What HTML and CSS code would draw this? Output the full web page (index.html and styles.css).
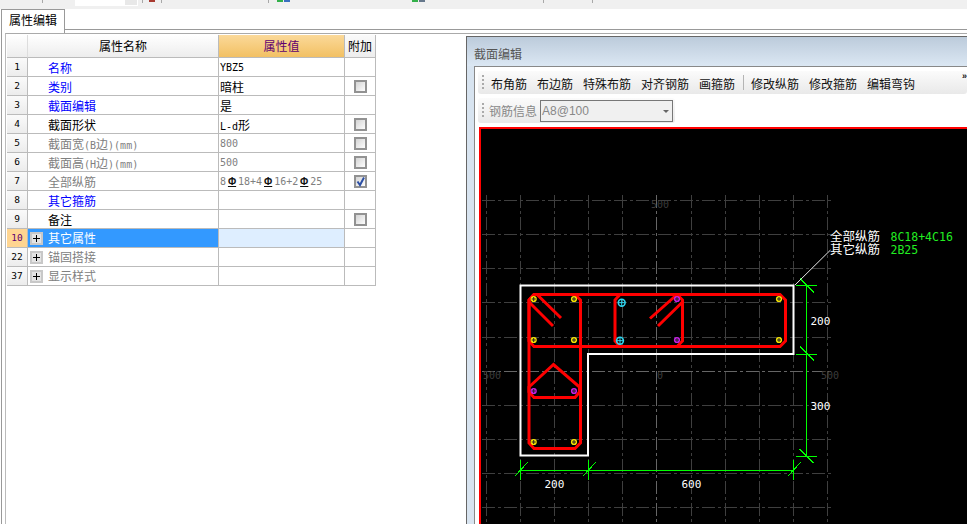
FILE: index.html
```html
<!DOCTYPE html>
<html lang="zh-CN">
<head>
<meta charset="utf-8">
<title>属性编辑</title>
<link rel="stylesheet" href="styles.css">
</head>
<body>
<div class="app">
  <div class="topstrip">
    <i class="sep s1"></i>
    <span class="combo-stub"><span class="stub-a"></span><span class="stub-b"></span></span>
    <i class="sep s2"></i>
    <span class="ico red"></span>
    <i class="sep s3"></i>
    <i class="sep s4"></i>
    <span class="ico gb"><b></b><u></u></span>
    <span class="ico gb2"><b></b><u></u></span>
    <i class="sep s5"></i>
    <i class="sep s6"></i>
  </div>
  <div class="panel">
    <div class="tabs">
      <div class="tab">属性编辑</div>
      <div class="tabline"></div>
    </div>
    <div class="pane">
      <div class="table">
        <div class="row head">
          <div class="c num"></div>
          <div class="c name">属性名称</div>
          <div class="c val">属性值</div>
          <div class="c add">附加</div>
        </div>
        <div class="row"><div class="c num">1</div><div class="c name link">名称</div><div class="c val mono">YBZ5</div><div class="c add"></div></div>
        <div class="row"><div class="c num">2</div><div class="c name link">类别</div><div class="c val">暗柱</div><div class="c add"><span class="cb"></span></div></div>
        <div class="row"><div class="c num">3</div><div class="c name link">截面编辑</div><div class="c val">是</div><div class="c add"></div></div>
        <div class="row"><div class="c num">4</div><div class="c name">截面形状</div><div class="c val"><span class="mono">L-d</span>形</div><div class="c add"><span class="cb"></span></div></div>
        <div class="row"><div class="c num">5</div><div class="c name muted">截面宽<span class="mono">(B</span>边<span class="mono">)(mm)</span></div><div class="c val mono muted">800</div><div class="c add"><span class="cb"></span></div></div>
        <div class="row"><div class="c num">6</div><div class="c name muted">截面高<span class="mono">(H</span>边<span class="mono">)(mm)</span></div><div class="c val mono muted">500</div><div class="c add"><span class="cb"></span></div></div>
        <div class="row"><div class="c num">7</div><div class="c name muted">全部纵筋</div><div class="c val mono muted">8<span class="rb">Φ</span>18+4<span class="rb">Φ</span>16+2<span class="rb">Φ</span>25</div><div class="c add"><span class="cb"><svg class="tick" viewBox="0 0 11 11"><path d="M2.5 5.5 5 9 9 1.5"/></svg></span></div></div>
        <div class="row"><div class="c num">8</div><div class="c name link">其它箍筋</div><div class="c val"></div><div class="c add"></div></div>
        <div class="row"><div class="c num">9</div><div class="c name">备注</div><div class="c val"></div><div class="c add"><span class="cb"></span></div></div>
        <div class="row sel"><div class="c num">10</div><div class="c name tree"><span class="plus"></span>其它属性</div><div class="c val"></div><div class="c add"></div></div>
        <div class="row"><div class="c num">22</div><div class="c name tree muted"><span class="plus"></span>锚固搭接</div><div class="c val"></div><div class="c add"></div></div>
        <div class="row"><div class="c num">37</div><div class="c name tree muted"><span class="plus"></span>显示样式</div><div class="c val"></div><div class="c add"></div></div>
      </div>
      <div class="window">
        <div class="wtitle">截面编辑</div>
        <div class="wbody">
          <div class="bar bar1">
            <span class="grip"></span>
            <span class="btn">布角筋</span>
            <span class="btn">布边筋</span>
            <span class="btn">特殊布筋</span>
            <span class="btn">对齐钢筋</span>
            <span class="btn">画箍筋</span>
            <span class="bsep"></span>
            <span class="btn">修改纵筋</span>
            <span class="btn">修改箍筋</span>
            <span class="btn">编辑弯钩</span>
            <span class="chev">»</span>
          </div>
          <div class="bar bar2">
            <span class="grip"></span>
            <span class="blabel">钢筋信息</span>
            <span class="combo">A8@100<span class="arrow"></span></span>
          </div>
          <div class="canvas">
            <svg class="draw" viewBox="481 129 486 395" width="486" height="395">
              <defs>
                <g id="d"><circle r="3.1" fill="currentColor"/><path d="M-2 0H2M0-2V2" stroke="#222" stroke-width="1"/></g>
                <g id="dl"><circle r="3.4" fill="none" stroke="currentColor" stroke-width="1.6"/><path d="M-3 0H3M0-3V3" stroke="currentColor" stroke-width="1"/></g>
              </defs>
              <path class="grid" d="M482 200.5H833M482 234.5H833M482 268.5H833M482 302.5H833M482 337.5H833M482 405.5H833M482 439.5H833M482 473.5H833M482 507.5H833"/>
              <path class="grid" d="M486.5 195V524M520.5 195V524M554.5 195V524M588.5 195V524M622.5 195V524M691.5 195V524M725.5 195V524M759.5 195V524M793.5 195V524M827.5 195V524"/>
              <path class="grid axis" d="M482 371.5H833M656.5 195V524"/>
              <text class="tick-label" x="651" y="208">500</text>
              <text class="tick-label" x="483" y="379">500</text>
              <text class="tick-label" x="657" y="379">0</text>
              <text class="tick-label" x="821" y="379">500</text>

              <path class="outline" d="M520.5 285.5H793.5V354H588V455.5H520.5Z"/>

              <g class="bar-red">
                <path d="M534 294.5H780L785.5 300V341L780 346.5H534L529 341V300Z"/>
                <path d="M534 294.5H575L580.5 300V443L575 448.5H534L529 443V300Z"/>
                <path d="M620 294.5H677L682.5 300V341L677 346.5H620L615 341V300Z"/>
                <path d="M529 387L553.5 364.5L579.5 387V392L575 397.5H534L529 392Z"/>
                <path d="M529 302L553 326M537 294.5L561 318M677 294.5L650 318.5M682.5 302L658 326"/>
              </g>

              <use href="#d" class="yl" x="533.7" y="299"/>
              <use href="#d" class="yl" x="574" y="299"/>
              <use href="#d" class="yl" x="533.7" y="340"/>
              <use href="#d" class="yl" x="574" y="340"/>
              <use href="#d" class="yl" x="533.7" y="442"/>
              <use href="#d" class="yl" x="574" y="442"/>
              <use href="#d" class="yl" x="779" y="299"/>
              <use href="#d" class="yl" x="779" y="340"/>
              <use href="#d" class="mg" x="533.7" y="391"/>
              <use href="#d" class="mg" x="574" y="391"/>
              <use href="#d" class="mg" x="677" y="299"/>
              <use href="#d" class="mg" x="677" y="340"/>
              <use href="#dl" class="cy" x="621.7" y="302.7"/>
              <use href="#dl" class="cy" x="620" y="340.7"/>

              <path class="dim" d="M806.5 285V457M796 285.5H817M796 354.5H817M796 456.5H817M800 278.5L814 292.5M800 346.5L814 360.5M799.5 449L813.5 463"/>
              <path class="dim" d="M520.5 470.5H793.5M520.5 460V480M588.5 460V480M793.5 460V480M514.5 476.5L527.5 462.5M582.5 476.5L595.5 462.5M787.5 476.5L800.5 462.5"/>

              <path class="leader" d="M795 285L830.5 250"/>
              <text class="note" x="830" y="241">全部纵筋</text>
              <text class="note" x="830" y="254">其它纵筋</text>
              <text class="note-g" x="890.5" y="241">8C18+4C16</text>
              <text class="note-g" x="890.5" y="254">2B25</text>

              <text class="size" x="810.5" y="324.5">200</text>
              <text class="size" x="810.5" y="409.5">300</text>
              <text class="size" x="544.5" y="487.5">200</text>
              <text class="size" x="681.5" y="487.5">600</text>
            </svg>
          </div>
        </div>
      </div>
    </div>
  </div>
</div>
</body>
</html>
```
FILE: styles.css
```css
* { box-sizing: border-box; }
html, body { margin: 0; height: 100%; overflow: hidden; background: #fff; }
body { font-family: "Noto Sans CJK SC", "Liberation Sans", sans-serif; font-size: 12px; color: #000; }
.app { width: 967px; height: 524px; display: flex; flex-direction: column; overflow: hidden; }

/* clipped toolbar strip */
.topstrip { flex: none; height: 9px; background: #f0f0f0; display: flex; align-items: flex-start; }
.sep { flex: none; width: 1px; height: 3px; background: #a8a8a8; }
.s1 { margin-left: 42px; }
.combo-stub { display: flex; margin-left: 32px; height: 6px; border-bottom: 1px solid #fff; border-right: 1px solid #fff; }
.stub-a { width: 50px; background: #fff; }
.stub-b { width: 12px; background: #e8e8e8; }
.s2 { margin-left: 4px; }
.ico { flex: none; display: flex; height: 2px; }
.ico.red { width: 6px; margin-left: 6px; background: #a83a30; }
.s3 { margin-left: 6px; }
.s4 { margin-left: 106px; }
.ico.gb { margin-left: 8px; width: 13px; }
.ico.gb2 { margin-left: 122px; width: 13px; }
.ico b { width: 6px; background: #33b04a; }
.ico u { width: 6px; margin-left: 1px; background: #3a70c0; }
.ico.gb2 u { background: #66788c; }
.s5 { margin-left: 118px; }
.s6 { margin-left: 48px; }

/* left panel + tab */
.panel { flex: 1; min-height: 0; margin-left: 1px; border-left: 1px solid #999; display: flex; flex-direction: column; }
.tabs { flex: none; height: 24px; display: flex; align-items: flex-start; }
.tab { flex: none; width: 63px; height: 24px; border-top: 1px solid #999; border-right: 1px solid #999; padding-left: 7px; line-height: 19px; font-size: 12px; }
.tabline { flex: 1; height: 21px; border-bottom: 1px solid #999; }
.pane { flex: 1; min-height: 0; margin-left: 3px; border-left: 1px solid #bbb; border-top: 1px solid #aaa; padding-top: 1px; display: flex; align-items: stretch; }

/* property table */
.table { flex: none; align-self: flex-start; margin-left: 1px; width: 369px; }
.row { display: grid; grid-template-columns: 21px 191px 126px 31px; height: 19px; }
.c { border-right: 1px solid #bbb; border-bottom: 1px solid #bbb; line-height: 20px; white-space: nowrap; overflow: hidden; }
.num { background: linear-gradient(#fafafa, #ececec); font-family: "DejaVu Sans Mono", monospace; font-size: 9.5px; line-height: 18px; text-align: center; }
.name { padding-left: 20px; }
.val { padding-left: 1px; }
.add { display: flex; align-items: center; justify-content: center; }
.link { color: #0000ff; }
.muted { color: #808080; }
.mono { font-family: "DejaVu Sans Mono", monospace; font-size: 10px; }
.rb { display: inline-block; width: 12px; text-align: center; color: #111; font-family: "Liberation Sans", sans-serif; font-weight: bold; font-size: 10px; line-height: 9px; text-decoration: underline; }

.head { height: 23px; }
.head .c { line-height: 22px; text-align: center; background: linear-gradient(#fff, #ededed); border-right-color: #ddd; border-bottom-color: #bbb; padding: 0; display: block; }
.head .name { border-right-color: #bbb; }
.head .val { background: linear-gradient(#fbd999, #f2c063); color: #5f0070; border-right-color: #bbb; }
.head .add { background: linear-gradient(#fafafa, #ededed); border-right-color: #bbb; }

.cb { display: block; position: relative; width: 13px; height: 13px; border: 2px solid #929292; background: linear-gradient(135deg, #d4d4d4, #fdfdfd); }
.tick { display: block; position: absolute; left: -1px; top: -1px; width: 11px; height: 11px; fill: none; stroke: #2c4fa5; stroke-width: 2; }

.tree { padding-left: 2px; display: flex; align-items: center; }
.plus { flex: none; position: relative; width: 13px; height: 13px; margin-right: 5px; border: 2px solid #c8c8c8; background: #e4e4e4; }
.plus::before, .plus::after { content: ""; position: absolute; background: #000; }
.plus::before { left: 1px; top: 4px; width: 7px; height: 1px; }
.plus::after { left: 4px; top: 1px; width: 1px; height: 7px; }

.sel .num { background: #ffd591; color: #5f0070; }
.sel .name { background: #3399ff; color: #fff; }
.sel .val { background: #deeeff; }

/* floating section editor */
.window { flex: none; width: 501px; margin-left: auto; margin-top: 1px; border-top: 1px solid #666; border-left: 1px solid #666; background: #d8e4f0; display: flex; flex-direction: column; overflow: hidden; }
.wtitle { flex: none; height: 29px; padding-left: 7px; line-height: 33px; color: #555; background: linear-gradient(#bccbdb, #dbe7f3); }
.wbody { flex: 1; min-height: 0; margin-left: 7px; border-left: 1px solid #888; border-top: 1px solid #888; background: #fff; padding-top: 4px; display: flex; flex-direction: column; }
.bar { flex: none; margin-left: 3px; display: flex; align-items: center; background: linear-gradient(#fbfbfb, #e9e9e9); border-radius: 3px; }
.bar1 { height: 23px; }
.bar2 { height: 25px; width: 197px; margin-top: 4px; }
.grip { flex: none; width: 2px; height: 15px; margin-left: 4px; margin-right: 2px; background: repeating-linear-gradient(#aaa 0 2px, transparent 2px 4px); }
.btn { flex: none; padding: 2px 5px 0; color: #111; white-space: nowrap; }
.bsep { flex: none; width: 1px; height: 15px; margin: 0 2px 0 3px; background: #b4b4b4; }
.chev { margin-left: auto; align-self: flex-start; font-family: "Liberation Sans", sans-serif; font-weight: bold; font-size: 9px; line-height: 11px; color: #111; }
.blabel { flex: none; margin-left: 3px; color: #888; white-space: nowrap; }
.combo { flex: none; position: relative; width: 133px; height: 22px; margin-left: 3px; padding-left: 1px; border: 1px solid #777; background: #f0f0f0; color: #888; font-family: "Liberation Sans", sans-serif; font-size: 12px; line-height: 20px; }
.arrow { position: absolute; right: 3px; top: 9px; border-left: 3px solid transparent; border-right: 3px solid transparent; border-top: 3px solid #666; }

/* drawing */
.canvas { flex: 1; min-height: 0; margin-top: 4px; margin-left: 4px; border-top: 2px solid #f00; border-left: 2px solid #f00; background: #000; overflow: hidden; }
.draw { display: block; }
.grid { fill: none; stroke: #3f3f3f; stroke-width: 1; stroke-dasharray: 13 3 3 3; }
.axis { stroke: #666; }
.tick-label { font-family: "DejaVu Sans Mono", monospace; font-size: 10px; fill: #3c3c3c; }
.outline { fill: none; stroke: #fff; stroke-width: 2; }
.bar-red path { fill: none; stroke: #f00; stroke-width: 3; }
.yl { color: #f5e400; }
.mg { color: #c81ee8; }
.cy { color: #2fd6f0; }
.dim { fill: none; stroke: #00ff00; stroke-width: 1; shape-rendering: crispEdges; }
.leader { fill: none; stroke: #e8e8e8; stroke-width: 1; }
.note { font-size: 12.5px; fill: #fff; }
.note-g { font-family: "DejaVu Sans Mono", monospace; font-size: 11.5px; fill: #22ee22; }
.size { font-family: "DejaVu Sans Mono", monospace; font-size: 11px; fill: #fff; }
```
